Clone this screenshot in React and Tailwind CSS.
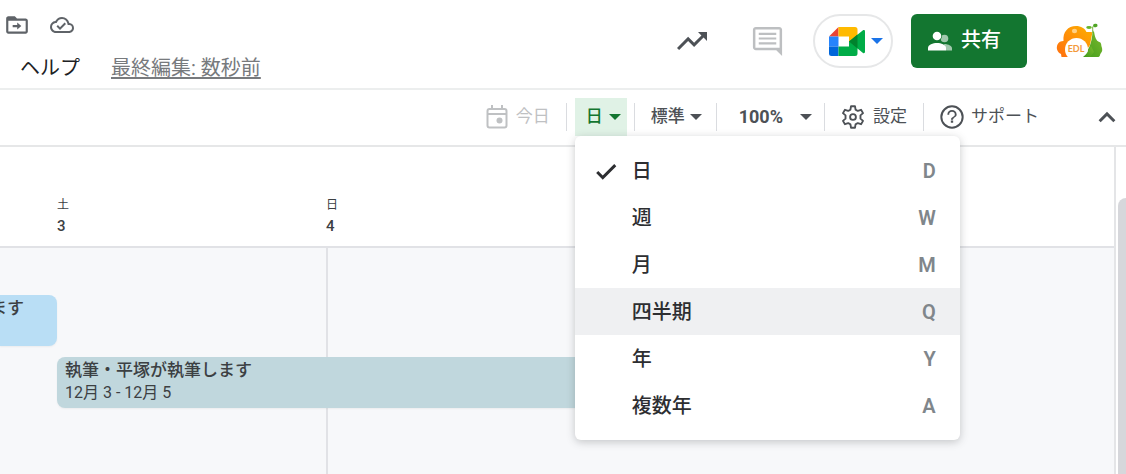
const views = [
  { label: "日", shortcut: "D", checked: true },
  { label: "週", shortcut: "W" },
  { label: "月", shortcut: "M" },
  { label: "四半期", shortcut: "Q", active: true },
  { label: "年", shortcut: "Y" },
  { label: "複数年", shortcut: "A" },
];

function Icon({ className, d }) {
  return (
    <svg viewBox="0 0 24 24" fill="currentColor" aria-hidden="true" className={className}>
      <path fillRule="evenodd" d={d} />
    </svg>
  );
}

function Caret({ className }) {
  return (
    <svg viewBox="0 0 12 6" fill="currentColor" aria-hidden="true" className={`h-1.5 w-3 ${className || ""}`}>
      <path d="M0 0h12L6 6z" />
    </svg>
  );
}

function Separator() {
  return <span aria-hidden="true" className="h-7 w-px bg-[#dadce0]" />;
}

function MeetLogo() {
  return (
    <svg viewBox="0 0 36 29" aria-hidden="true" className="h-[29px] w-9">
      <path d="M0 9.500 9.500 0V9.500z" fill="#ea4335" />
      <path d="M0 9.500h9.500v10H0z" fill="#2684fc" />
      <path d="M0 19.500h9.500V29H2.500A2.500 2.500 0 0 1 0 26.500z" fill="#0066da" />
      <path d="M9.500 0h16.500a2.500 2.500 0 0 1 2.500 2.500V9l-8.500 6V9.500H9.500z" fill="#ffba00" />
      <path d="M9.500 19.500H20V14l8.500 6v6.500A2.500 2.500 0 0 1 26 29H9.500z" fill="#00ac47" />
      <path d="M20 14.500 34 3.200c.8-.6 2-.1 2 1v20.800c0 1-1.200 1.500-2 .9z" fill="#00ac47" />
      <path d="M20 14.500 28.500 7.600v14z" fill="#00832d" />
    </svg>
  );
}

function Avatar() {
  return (
    <svg viewBox="0 0 48 36" aria-hidden="true" className="h-9 w-12">
      <defs>
        <linearGradient id="sun" x1="0" y1="1" x2="1" y2="0">
          <stop offset="0" stopColor="#ff6f0f" />
          <stop offset="1" stopColor="#fdb000" />
        </linearGradient>
        <linearGradient id="leaf" x1="0" y1="1" x2="1" y2="0">
          <stop offset="0" stopColor="#3f9a1c" />
          <stop offset="1" stopColor="#7cba2e" />
        </linearGradient>
      </defs>
      <path d="M12 34H5.500L5 31C1 29 0 25 1.500 21.500 2.500 19 5 18 7.500 18 6.500 9 12 3 20 3c5 0 9 2.500 10.500 6H35c1 0 1.300.6 1.200 1.500L34 22 26 34z" fill="url(#sun)" />
      <path d="M26 34c6-5 10-13 10.500-25.500h1.500c.8 4 1 6 3 9 1 1.500 4 1 4.200 4 0 2 1.300 3.500 1 6-.3 2-1.700 2.500-2.200 4.500-.2 1.500-1 2-2.500 2z" fill="url(#leaf)" />
      <circle cx="20.500" cy="26.500" r="11.500" fill="#fff" />
      <path d="M27 34c3.500-2.500 6.500-7 8-11l3 6-4 5z" fill="url(#leaf)" />
      <ellipse cx="18.500" cy="8" rx="2.600" ry="2.200" fill="#ffd083" />
      <path d="M37 10c-.3-3-.5-4-.2-6.500" stroke="#6fae2b" strokeWidth="1" fill="none" />
      <ellipse cx="33" cy="4.500" rx="2.800" ry="1.400" fill="#67b52b" />
      <ellipse cx="39.300" cy="2.500" rx="2.300" ry="1.700" fill="#4fa524" transform="rotate(-15 39.300 2.500)" />
      <text x="20" y="29" textAnchor="middle" fontSize="9" fontWeight="700" fill="#f39a3a" className="font-['Lato',sans-serif]">EDL</text>
    </svg>
  );
}

function ViewMenu() {
  return (
    <ul
      role="menu"
      aria-label="表示期間"
      className="absolute top-full left-0 z-10 w-[385px] rounded-md bg-white py-[11px] shadow-[0_2px_8px_rgba(60,64,67,0.28)]"
    >
      {views.map((v) => (
        <li key={v.label} role="none">
          <button
            type="button"
            role="menuitemradio"
            aria-checked={Boolean(v.checked)}
            className={`flex h-[47px] w-full items-center pr-6 pl-[18px] text-xl text-[#2d2e31] ${v.active ? "bg-[#eff0f2]" : ""}`}
          >
            <span className="w-[39px]">
              {v.checked && <Icon className="size-[26px]" d="M9 16.170 4.830 12l-1.920 1.910L9 20 21.500 7.500 19.600 5.590z" />}
            </span>
            <span className="flex-1 text-left font-medium">{v.label}</span>
            <span className="font-semibold text-[#80868b]">{v.shortcut}</span>
          </button>
        </li>
      ))}
    </ul>
  );
}

function Header() {
  return (
    <header className="flex items-start justify-between border-b-2 border-[#eceeee] pr-[22px] pb-1">
      <div className="pt-3">
        <div className="flex items-center gap-5 pl-1 text-[#5f6368]">
          <button type="button" aria-label="移動">
            <Icon className="size-[26px]" d="M20 6h-8l-2-2H4C2.900 4 2 4.900 2 6v12c0 1.100.9 2 2 2h16c1.100 0 2-.9 2-2V8c0-1.100-.9-2-2-2zM20 18H4V8h16zM12.200 14v2.200L16 13l-3.800-3.200V12H8v2z" />
          </button>
          <button type="button" aria-label="保存状態">
            <Icon className="size-6" d="M19.350 10.040A7.490 7.490 0 0 0 12 4C9.110 4 6.600 5.640 5.350 8.040A5.994 5.994 0 0 0 0 14c0 3.310 2.690 6 6 6h13c2.760 0 5-2.240 5-5 0-2.640-2.050-4.780-4.650-4.960zM19 18H6c-2.210 0-4-1.790-4-4 0-2.050 1.530-3.760 3.560-3.970l1.070-.11.5-.95A5.469 5.469 0 0 1 12 6c2.620 0 4.880 1.860 5.390 4.430l.3 1.500 1.530.11A2.980 2.980 0 0 1 22 15c0 1.650-1.350 3-3 3zM10 14.200l-2.100-2.100-1.400 1.400L10 17l6-6-1.400-1.400z" />
          </button>
        </div>
        <div className="mt-3.5 flex items-center gap-[31px] pl-5 text-xl leading-8">
          <button type="button" className="text-[#202124]">ヘルプ</button>
          <a href="#history" className="text-[#777a7d] underline underline-offset-2">最終編集: 数秒前</a>
        </div>
      </div>
      <div className="flex items-center pt-3.5">
        <button type="button" aria-label="アクティビティ" className="text-[#4d5156]">
          <Icon className="size-9" d="m16 6 2.290 2.290-4.880 4.880-4-4L2 16.590 3.410 18l6-6 4 4 6.300-6.290L22 12V6z" />
        </button>
        <button type="button" aria-label="コメント" className="ml-10 text-[#bdbfc1]">
          <Icon className="size-[35px]" d="M22 4c0-1.100-.9-2-2-2H4c-1.100 0-2 .9-2 2v12c0 1.100.9 2 2 2h14l4 4zM20.300 16.300H3.700V3.700h16.600zM6 12.500h12V14H6zM6 9.200h12v1.500H6zM6 6h12v1.500H6z" />
        </button>
        <button
          type="button"
          aria-label="ビデオ通話"
          className="ml-7 flex h-[54px] items-center gap-1.5 rounded-full border-2 border-[#e6e7e8] pr-2 pl-3.5"
        >
          <MeetLogo />
          <Caret className="text-[#1a73e8]" />
        </button>
        <button
          type="button"
          className="ml-[18px] flex h-[54px] items-center gap-2 rounded-md bg-[#137630] pr-[26px] pl-4 text-xl font-medium text-white"
        >
          <svg viewBox="0 0 26 20" fill="currentColor" aria-hidden="true" className="h-5 w-[26px]">
            <circle cx="17.500" cy="7.500" r="3.800" opacity=".6" />
            <path d="M17 13c5 0 8 2.500 8 4v2.500h-6z" opacity=".6" />
            <circle cx="10" cy="5" r="5" fill="#137630" />
            <circle cx="10" cy="5" r="4.300" />
            <path d="M1 19.500V17c0-3.300 5-5 9-5s9 1.700 9 5v2.500z" />
          </svg>
          <span className="pb-0.5">共有</span>
        </button>
        <button type="button" aria-label="アカウント" className="ml-[29px]">
          <Avatar />
        </button>
      </div>
    </header>
  );
}

function Toolbar() {
  return (
    <div role="toolbar" className="flex items-start justify-end border-b-2 border-[#e6e7e8] pt-2 pr-[5px] pb-[9px] text-[17px] text-[#4d5156]">
      <button type="button" disabled className="mr-4 flex h-[38px] items-center gap-2 text-[#bfc1c3]">
        <svg viewBox="0 0 22 24" fill="none" stroke="currentColor" strokeWidth="2" aria-hidden="true" className="h-6 w-[22px]">
          <rect x="1.500" y="4" width="19" height="18.500" rx="2" />
          <path d="M1.500 9h19M6 0v4M16 0v4" />
          <circle cx="13.500" cy="15.500" r="3" fill="currentColor" stroke="none" />
        </svg>
        今日
      </button>
      <div className="flex h-[38px] items-center">
        <Separator />
        <div className="relative ml-2">
          <button
            type="button"
            aria-haspopup="menu"
            aria-expanded="true"
            className="flex h-[38px] items-center gap-1.5 bg-[#e0f2e6] pr-1.5 pl-[11px] font-medium text-[#137630]"
          >
            日
            <Caret />
          </button>
          <ViewMenu />
        </div>
        <span className="ml-[7px] flex"><Separator /></span>
        <button type="button" className="mr-3.5 ml-4 flex items-center gap-[5px] font-medium">
          標準
          <Caret />
        </button>
        <Separator />
        <button type="button" className="mr-3 ml-[22px] flex items-center gap-[17px] text-lg font-bold">
          100%
          <Caret />
        </button>
        <Separator />
        <button type="button" className="mr-4 ml-3.5 flex items-center gap-1.5">
          <svg viewBox="0 0 24 24" fill="none" stroke="currentColor" strokeWidth="1.600" strokeLinejoin="round" aria-hidden="true" className="size-7">
            <path d="M10.300 2.800h3.400l.5 2.900 1.900 1.100 2.800-1 1.700 2.900-2.200 1.900v2.800l2.200 1.900-1.700 2.900-2.800-1-1.900 1.100-.5 2.900h-3.400l-.5-2.900-1.900-1.100-2.800 1-1.700-2.900 2.200-1.900v-2.800L3.400 8.700l1.700-2.900 2.800 1 1.900-1.100z" />
            <circle cx="12" cy="12" r="2.500" />
          </svg>
          設定
        </button>
        <Separator />
        <button type="button" className="ml-3.5 flex items-center gap-[5px]">
          <Icon
            className="size-7"
            d="M11 17h2v-2h-2zm1-15a10 10 0 1 0 0 20 10 10 0 0 0 0-20zm0 18.300a8.300 8.300 0 1 1 0-16.600 8.300 8.300 0 0 1 0 16.600zM12 6a4 4 0 0 0-4 4h1.600a2.400 2.400 0 0 1 4.800 0c0 2-3.300 1.750-3.300 4.300h1.800c0-1.800 3.100-2.300 3.100-4.300a4 4 0 0 0-4-4z"
          />
          サポート
        </button>
        <button type="button" aria-label="折りたたむ" className="ml-[54px]">
          <Icon className="size-7" d="M12 7.500 4.800 14.700 6.600 16.500 12 11.100l5.400 5.400 1.800-1.800z" />
        </button>
      </div>
    </div>
  );
}

function Timeline() {
  return (
    <main className="flex flex-1">
      <div className="flex flex-1 flex-col overflow-hidden border-r-2 border-[#e4e5e7]">
        <div className="grid grid-cols-[57px_269px_1fr] border-b-2 border-[#e1e2e6] pt-12 pb-[9px] text-[#3c4043]">
          <div className="col-start-2">
            <div className="text-xs leading-5">土</div>
            <div className="text-[15px] leading-[22px] font-medium">3</div>
          </div>
          <div>
            <div className="text-xs leading-5">日</div>
            <div className="text-[15px] leading-[22px] font-medium">4</div>
          </div>
        </div>
        <div className="grid flex-1 grid-cols-[57px_269px_269px_269px_1fr] grid-rows-[47px_51px_11px_51px_1fr] bg-[#f7f8fa] text-[#3c4043]">
          <div aria-hidden="true" className="col-start-3 row-span-full row-start-1 border-l-2 border-[#e1e2e6]" />
          <div className="col-start-1 row-start-2 flex justify-end overflow-hidden rounded-r-lg bg-[#b9def5] pr-[33px] text-[17px] leading-[26px] font-medium whitespace-nowrap shadow-xs">
            ます
          </div>
          <div className="col-span-3 col-start-2 row-start-4 rounded-lg bg-[#c0d7dd] pl-2 whitespace-nowrap shadow-xs">
            <div className="text-[17px] leading-[26px] font-medium">執筆・平塚が執筆します</div>
            <div className="text-base leading-5">12月 3 - 12月 5</div>
          </div>
        </div>
      </div>
      <div className="flex w-2.5 flex-col pt-[51px] pl-0.5">
        <div className="flex-1 rounded-tl-lg bg-[#d6d7db]" />
      </div>
    </main>
  );
}

export default function App() {
  return (
    <div className="flex min-h-screen flex-col overflow-hidden bg-white font-['Roboto','Noto_Sans_CJK_JP',sans-serif]">
      <Header />
      <Toolbar />
      <Timeline />
    </div>
  );
}
